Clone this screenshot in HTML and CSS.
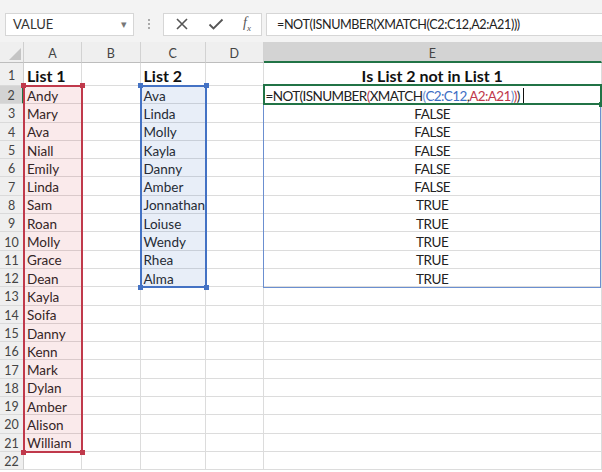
FILE: index.html
```html
<!DOCTYPE html>
<html lang="en">
  <head>
    <meta charset="UTF-8" />
    <title>Is List 2 not in List 1</title>
    <link rel="stylesheet" href="styles.css">
  </head>
  <body>
    <div class="toolbar">
      <div class="name-box">
        <span>VALUE</span>
        <span class="drop">&#9662;</span>
      </div>
      <div class="grip"><i></i><i></i><i></i></div>
      <div class="fx-buttons">
        <svg width="14" height="14" viewBox="0 0 14 14"><path d="M2 2L12 12M12 2L2 12" stroke="#555" stroke-width="1.6" fill="none"/></svg>
        <svg width="16" height="14" viewBox="0 0 16 14"><path d="M1.5 7.5L5.5 11.5L14.5 2.5" stroke="#555" stroke-width="1.8" fill="none"/></svg>
        <span class="fx">f<sub>x</sub></span>
      </div>
      <div class="formula-bar caps">=NOT(ISNUMBER(XMATCH(C2:C12,A2:A21)))</div>
    </div>

    <div class="sheet-wrap">
      <div class="sheet">
        <!-- column headers -->
        <div class="corner"></div>
        <div class="ch">A</div>
        <div class="ch">B</div>
        <div class="ch">C</div>
        <div class="ch">D</div>
        <div class="ch active">E</div>

        <div class="rh">1</div><div class="c bold">List 1</div><div class="c"></div><div class="c bold">List 2</div><div class="c"></div><div class="c bold mid">Is List 2 not in List 1</div>
        <div class="rh active">2</div><div class="c">Andy</div><div class="c"></div><div class="c">Ava</div><div class="c"></div><div class="c edit caps">=NOT(ISNUMBER<span class="p1">(</span>XMATCH<span class="p2">(</span><span class="blue">C2:C12</span>,<span class="red">A2:A21</span><span class="p2">)</span><span class="p1">)</span>)<span class="caret"></span></div>
        <div class="rh">3</div><div class="c">Mary</div><div class="c"></div><div class="c">Linda</div><div class="c"></div><div class="c mid caps">FALSE</div>
        <div class="rh">4</div><div class="c">Ava</div><div class="c"></div><div class="c">Molly</div><div class="c"></div><div class="c mid caps">FALSE</div>
        <div class="rh">5</div><div class="c">Niall</div><div class="c"></div><div class="c">Kayla</div><div class="c"></div><div class="c mid caps">FALSE</div>
        <div class="rh">6</div><div class="c">Emily</div><div class="c"></div><div class="c">Danny</div><div class="c"></div><div class="c mid caps">FALSE</div>
        <div class="rh">7</div><div class="c">Linda</div><div class="c"></div><div class="c">Amber</div><div class="c"></div><div class="c mid caps">FALSE</div>
        <div class="rh">8</div><div class="c">Sam</div><div class="c"></div><div class="c">Jonnathan</div><div class="c"></div><div class="c mid caps">TRUE</div>
        <div class="rh">9</div><div class="c">Roan</div><div class="c"></div><div class="c">Loiuse</div><div class="c"></div><div class="c mid caps">TRUE</div>
        <div class="rh">10</div><div class="c">Molly</div><div class="c"></div><div class="c">Wendy</div><div class="c"></div><div class="c mid caps">TRUE</div>
        <div class="rh">11</div><div class="c">Grace</div><div class="c"></div><div class="c">Rhea</div><div class="c"></div><div class="c mid caps">TRUE</div>
        <div class="rh">12</div><div class="c">Dean</div><div class="c"></div><div class="c">Alma</div><div class="c"></div><div class="c mid caps">TRUE</div>
        <div class="rh">13</div><div class="c">Kayla</div><div class="c"></div><div class="c"></div><div class="c"></div><div class="c"></div>
        <div class="rh">14</div><div class="c">Soifa</div><div class="c"></div><div class="c"></div><div class="c"></div><div class="c"></div>
        <div class="rh">15</div><div class="c">Danny</div><div class="c"></div><div class="c"></div><div class="c"></div><div class="c"></div>
        <div class="rh">16</div><div class="c">Kenn</div><div class="c"></div><div class="c"></div><div class="c"></div><div class="c"></div>
        <div class="rh">17</div><div class="c">Mark</div><div class="c"></div><div class="c"></div><div class="c"></div><div class="c"></div>
        <div class="rh">18</div><div class="c">Dylan</div><div class="c"></div><div class="c"></div><div class="c"></div><div class="c"></div>
        <div class="rh">19</div><div class="c">Amber</div><div class="c"></div><div class="c"></div><div class="c"></div><div class="c"></div>
        <div class="rh">20</div><div class="c">Alison</div><div class="c"></div><div class="c"></div><div class="c"></div><div class="c"></div>
        <div class="rh">21</div><div class="c">William</div><div class="c"></div><div class="c"></div><div class="c"></div><div class="c"></div>
        <div class="rh">22</div><div class="c"></div><div class="c"></div><div class="c"></div><div class="c"></div><div class="c"></div>
      </div>

      <!-- range highlights drawn over the cells -->
      <div class="overlay">
        <div class="range range-a"><i class="h tl"></i><i class="h tr"></i><i class="h bl"></i><i class="h br"></i></div>
        <div class="range range-c"><i class="h tl"></i><i class="h tr"></i><i class="h bl"></i><i class="h br"></i></div>
        <div class="range range-e"></div>
        <div class="range range-edit"><i class="h br"></i></div>
      </div>
    </div>
  </body>
</html>
```

FILE: styles.css
```css
body {
  margin: 0;
  background: #ffffff;
  font-family: 'Lato', 'Liberation Sans', sans-serif;
  color: #222;
  overflow: hidden;
}
.toolbar {
  height: 42px;
  background: #f3f3f3;
  display: flex;
  align-items: center;
  padding-left: 5px;
  box-sizing: border-box;
  padding-top: 6px;
}
.name-box {
  width: 129px;
  height: 23px;
  background: #fff;
  border: 1px solid #d6d6d6;
  box-sizing: border-box;
  display: flex;
  align-items: center;
  justify-content: space-between;
  padding: 0 6px 0 7px;
  font-size: 13px;
  color: #333;
}
.drop {
  color: #777;
  font-size: 11px;
}
.grip {
  width: 29px;
  display: flex;
  flex-direction: column;
  align-items: center;
  gap: 2px;
}
.grip i {
  width: 2px;
  height: 2px;
  background: #aaa;
}
.fx-buttons {
  width: 99px;
  height: 23px;
  background: #fff;
  border: 1px solid #d6d6d6;
  box-sizing: border-box;
  display: flex;
  align-items: center;
  justify-content: space-between;
  padding: 0 10px 0 11px;
}
.fx {
  font-family: 'Liberation Serif', serif;
  font-style: italic;
  font-size: 14px;
  color: #555;
}
.fx sub {
  font-size: 9px;
}
.formula-bar {
  flex: 1;
  height: 23px;
  margin-left: 4px;
  background: #fff;
  border: 1px solid #d6d6d6;
  border-right: none;
  box-sizing: border-box;
  padding-left: 10px;
  line-height: 22px;
  white-space: nowrap;
}
.caps {
  font-size: 12.6px;
  letter-spacing: -0.4px;
}

.sheet-wrap {
  position: relative;
}
.sheet,
.overlay {
  display: grid;
  grid-template-columns: 24px 58px 58.5px 65.5px 57.5px 1fr;
  grid-template-rows: 21px 23px repeat(21, 18.3px);
}
.overlay {
  position: absolute;
  inset: 0;
  pointer-events: none;
}
.corner {
  background: #efefef;
  border-right: 1px solid #cfcfcf;
  border-bottom: 1px solid #bdbdbd;
  position: relative;
}
.corner::after {
  content: '';
  position: absolute;
  right: 2px;
  bottom: 2px;
  border-left: 12px solid transparent;
  border-bottom: 12px solid #c4c4c4;
}
.ch {
  background: #efefef;
  border-right: 1px solid #d2d2d2;
  border-bottom: 1px solid #bdbdbd;
  font-size: 12.5px;
  color: #444;
  text-align: center;
  line-height: 23px;
}
.ch.active {
  background: #d3d3d3;
  border-bottom: 2px solid #217346;
}
.rh {
  background: #efefef;
  border-right: 1px solid #cfcfcf;
  border-bottom: 1px solid #dadada;
  font-size: 12.5px;
  color: #444;
  display: flex;
  align-items: center;
  justify-content: center;
  padding-top: 2px;
}
.rh.active {
  background: #d3d3d3;
  border-right: 2px solid #217346;
}
.c {
  border-right: 1px solid #dcdcdc;
  border-bottom: 1px solid #dcdcdc;
  font-size: 13.5px;
  padding: 2px 0 0 3px;
  white-space: nowrap;
  display: flex;
  align-items: center;
  min-width: 0;
}
.bold {
  font-weight: bold;
  font-size: 16px;
  color: #111;
}
.mid {
  justify-content: center;
  padding-left: 0;
}
.edit {
  padding-left: 2px;
  letter-spacing: -0.6px;
}
.blue {
  color: #3e6fc4;
}
.red {
  color: #c0394b;
}
.p1 {
  color: #c0394b;
}
.p2 {
  color: #6a8fd0;
}
.caret {
  display: inline-block;
  width: 1px;
  height: 15px;
  background: #111;
  margin-left: 3px;
}

.range {
  position: relative;
}
.range-a {
  grid-column: 2;
  grid-row: 3 / 23;
  margin: -1px;
  border: 2px solid #c0394b;
  background: rgba(214, 60, 70, 0.11);
}
.range-c {
  grid-column: 4;
  grid-row: 3 / 14;
  margin: -1px;
  border: 2px solid #4472c4;
  background: rgba(68, 114, 196, 0.12);
}
.range-e {
  grid-column: 6;
  grid-row: 3 / 14;
  margin: -1px 1px -1px -1px;
  border: 1px solid #6b8fd0;
}
.range-edit {
  grid-column: 6;
  grid-row: 3;
  margin: -2px 0 -1px -1px;
  border: 2px solid #217346;
}
.h {
  position: absolute;
  width: 5px;
  height: 5px;
}
.range-a .h {
  background: #c0394b;
}
.range-c .h {
  background: #4472c4;
}
.range-edit .h {
  background: #217346;
}
.tl { left: -4px; top: -4px; }
.tr { right: -4px; top: -4px; }
.bl { left: -4px; bottom: -4px; }
.br { right: -4px; bottom: -4px; }
```
